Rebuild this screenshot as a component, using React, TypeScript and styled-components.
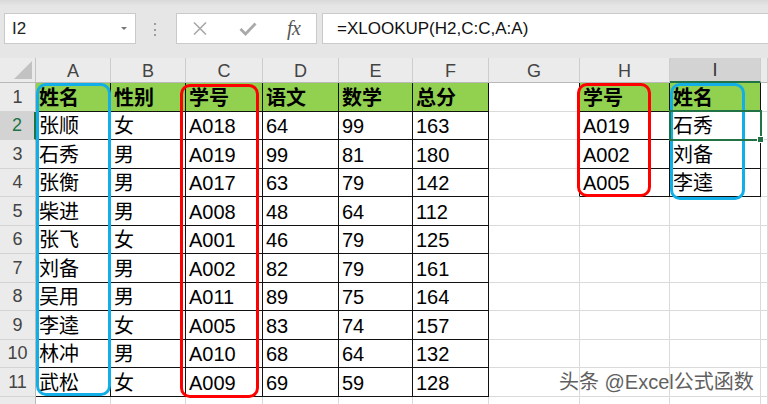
import React from "react";
import styled, { createGlobalStyle, css } from "styled-components";

const GlobalStyle = createGlobalStyle`
  html, body {
    margin: 0;
    padding: 0;
    background: #fff;
    overflow: hidden;
  }
  body {
    font-family: "Liberation Sans", "Noto Sans CJK SC", sans-serif;
  }
`;

const GREEN = "#217346";

const Page = styled.div`
  width: 768px;
  height: 404px;
  overflow: hidden;
  display: flex;
  flex-direction: column;
`;

const Toolbar = styled.div`
  height: 58px;
  flex: none;
  box-sizing: border-box;
  display: flex;
  align-items: flex-start;
  padding: 13px 0 0 4px;
  background: linear-gradient(#d9d9d9 0, #e6e6e6 6px, #e6e6e6 100%);
`;

const Box = styled.div`
  height: 31px;
  box-sizing: border-box;
  background: #fff;
  border: 1px solid #cacaca;
  display: flex;
  align-items: center;
`;

const NameBox = styled(Box)`
  width: 132px;
  justify-content: space-between;
  padding: 0 8px 0 7px;
  font-size: 17px;
  color: #222;
`;

const Caret = styled.span`
  width: 0;
  height: 0;
  border-left: 3px solid transparent;
  border-right: 3px solid transparent;
  border-top: 3px solid #777;
`;

const Grip = styled.div`
  display: flex;
  flex-direction: column;
  gap: 3.5px;
  margin: 10px 20px 0 18px;
  span {
    width: 2px;
    height: 2px;
    background: #9d9d9d;
  }
`;

const FxBox = styled(Box)`
  width: 141px;
  padding-left: 16px;
`;

const IconSlot = styled.span<{ $gap: number }>`
  display: flex;
  margin-left: ${(p) => p.$gap}px;
`;

const Fx = styled.span`
  font-family: "Liberation Serif", serif;
  font-style: italic;
  font-size: 20px;
  color: #555;
  margin-left: 30px;
  letter-spacing: -0.5px;
  line-height: 1;
  padding-bottom: 2px;
`;

const FormulaInput = styled(Box)`
  flex: 1;
  margin-left: 5px;
  border-right: none;
  padding-left: 14px;
  font-size: 17px;
  color: #111;
`;

const Sheet = styled.div`
  position: relative;
  flex: none;
  display: grid;
  grid-template-columns: 36px 75px 75px 77px 76px 74px 76px 91px 90px 91px 1fr;
  grid-template-rows: 25px repeat(12, 28.5px);
`;

const headBase = css`
  box-sizing: border-box;
  background: #ebebeb;
  color: #444;
  font-size: 18px;
  display: flex;
  align-items: center;
  justify-content: center;
`;

const Corner = styled.div`
  ${headBase};
  border-right: 1px solid #c4c4c4;
  border-bottom: 1px solid #b9b9b9;
  justify-content: flex-end;
  align-items: flex-end;
  padding: 0 3px 3px 0;
`;

const ColHead = styled.div<{ $active?: boolean }>`
  ${headBase};
  border-right: 1px solid #cdcdcd;
  border-bottom: 1px solid #b9b9b9;
  padding-top: 2px;
  ${(p) =>
    p.$active &&
    css`
      background: #d3d3d3;
      border-bottom: 2px solid ${GREEN};
      color: #333;
    `}
`;

const RowHead = styled.div<{ $active?: boolean }>`
  ${headBase};
  border-right: 1px solid #b9b9b9;
  border-bottom: 1px solid #d4d4d4;
  padding-top: 1px;
  ${(p) =>
    p.$active &&
    css`
      background: #d3d3d3;
      border-right: 2px solid ${GREEN};
      color: ${GREEN};
    `}
`;

const Cell = styled.div<{ $fill?: boolean; $box?: boolean; $edge?: boolean }>`
  box-sizing: border-box;
  overflow: hidden;
  white-space: nowrap;
  display: flex;
  align-items: flex-end;
  padding: 0 0 3px 3px;
  font-size: 20px;
  line-height: 1;
  color: #000;
  border-right: 1px solid ${(p) => (p.$box || p.$edge ? "#111" : "#dadada")};
  border-bottom: 1px solid ${(p) => (p.$box ? "#111" : "#dadada")};
  background: ${(p) => (p.$fill ? "#92d050" : "#fff")};
  font-weight: ${(p) => (p.$fill ? 700 : 400)};
`;

const Outline = styled.div<{ $color: string; $x: number; $y: number; $w: number; $h: number }>`
  position: absolute;
  left: ${(p) => p.$x}px;
  top: ${(p) => p.$y}px;
  width: ${(p) => p.$w}px;
  height: ${(p) => p.$h}px;
  box-sizing: border-box;
  border: 3px solid ${(p) => p.$color};
  border-radius: 10px;
  pointer-events: none;
`;

const Selection = styled.div`
  position: absolute;
  left: 669px;
  top: 52px;
  width: 93px;
  height: 31px;
  box-sizing: border-box;
  border: 2px solid ${GREEN};
  pointer-events: none;
`;

const FillHandle = styled.div`
  position: absolute;
  left: 757px;
  top: 78px;
  width: 7px;
  height: 7px;
  box-sizing: border-box;
  background: ${GREEN};
  border: 1px solid #fff;
`;

const Watermark = styled.div`
  position: absolute;
  left: 559px;
  top: 313px;
  font-size: 20px;
  line-height: 22px;
  color: #4f4f4f;
  white-space: nowrap;
  text-shadow: 0 0 2px #fff, 0 0 1px #fff;
  opacity: 0.9;
`;

const COLS = ["A", "B", "C", "D", "E", "F", "G", "H", "I", ""];

const students: [string, string, string, number, number, number][] = [
  ["张顺", "女", "A018", 64, 99, 163],
  ["石秀", "男", "A019", 99, 81, 180],
  ["张衡", "男", "A017", 63, 79, 142],
  ["柴进", "男", "A008", 48, 64, 112],
  ["张飞", "女", "A001", 46, 79, 125],
  ["刘备", "男", "A002", 82, 79, 161],
  ["吴用", "男", "A011", 89, 75, 164],
  ["李逵", "女", "A005", 83, 74, 157],
  ["林冲", "男", "A010", 68, 64, 132],
  ["武松", "女", "A009", 69, 59, 128],
];

const lookup: [string, string][] = [
  ["学号", "姓名"],
  ["A019", "石秀"],
  ["A002", "刘备"],
  ["A005", "李逵"],
];

const buildRows = (): string[][] => {
  const rows: string[][] = [];
  rows.push(["姓名", "性别", "学号", "语文", "数学", "总分", "", "", "", ""]);
  students.forEach((s) => rows.push([s[0], s[1], s[2], String(s[3]), String(s[4]), String(s[5]), "", "", "", ""]));
  rows.push(["", "", "", "", "", "", "", "", "", ""]);
  lookup.forEach((l, i) => {
    rows[i][7] = l[0];
    rows[i][8] = l[1];
  });
  return rows;
};

const XIcon = () => (
  <svg width="14" height="13" viewBox="0 0 14 13">
    <path d="M1 0.5 L13 12.5 M13 0.5 L1 12.5" stroke="#a9a9a9" strokeWidth="1.6" fill="none" />
  </svg>
);

const CheckIcon = () => (
  <svg width="18" height="14" viewBox="0 0 18 14">
    <path d="M1.5 7 L6.5 12 L16.5 1.5" stroke="#a9a9a9" strokeWidth="2.8" fill="none" />
  </svg>
);

export default function App() {
  const rows = buildRows();

  return (
    <Page>
      <GlobalStyle />
      <Toolbar>
        <NameBox>
          I2
          <Caret />
        </NameBox>
        <Grip>
          <span />
          <span />
          <span />
        </Grip>
        <FxBox>
          <IconSlot $gap={0}>
            <XIcon />
          </IconSlot>
          <IconSlot $gap={32}>
            <CheckIcon />
          </IconSlot>
          <Fx>fx</Fx>
        </FxBox>
        <FormulaInput>=XLOOKUP(H2,C:C,A:A)</FormulaInput>
      </Toolbar>

      <Sheet>
        <Corner>
          <svg width="18" height="18" viewBox="0 0 18 18">
            <polygon points="18,0 18,18 0,18" fill="#c2c2c2" />
          </svg>
        </Corner>
        {COLS.map((c, i) => (
          <ColHead key={i} $active={c === "I"}>
            {c}
          </ColHead>
        ))}
        {rows.map((row, r) => (
          <React.Fragment key={r}>
            {/* row 12 only peeks in at the bottom edge, its number is not visible */}
            <RowHead $active={r === 1}>{r < 11 ? r + 1 : ""}</RowHead>
            {row.map((v, c) => {
              const inMain = c <= 5 && r <= 10;
              const inLookup = (c === 7 || c === 8) && r <= 3;
              return (
                <Cell
                  key={c}
                  $box={inMain || inLookup}
                  $edge={c === 6 && r <= 3}
                  $fill={r === 0 && (inMain || inLookup)}
                >
                  {v}
                </Cell>
              );
            })}
          </React.Fragment>
        ))}

        <Outline $color="#12aee8" $x={36} $y={25} $w={75} $h={313} />
        <Outline $color="#ff0000" $x={180} $y={26} $w={79} $h={314} />
        <Outline $color="#ff0000" $x={577} $y={25} $w={74} $h={114} />
        <Outline $color="#12aee8" $x={670} $y={25} $w={75} $h={117} />
        <Selection />
        <FillHandle />
        <Watermark>头条 @Excel公式函数</Watermark>
      </Sheet>
    </Page>
  );
}
